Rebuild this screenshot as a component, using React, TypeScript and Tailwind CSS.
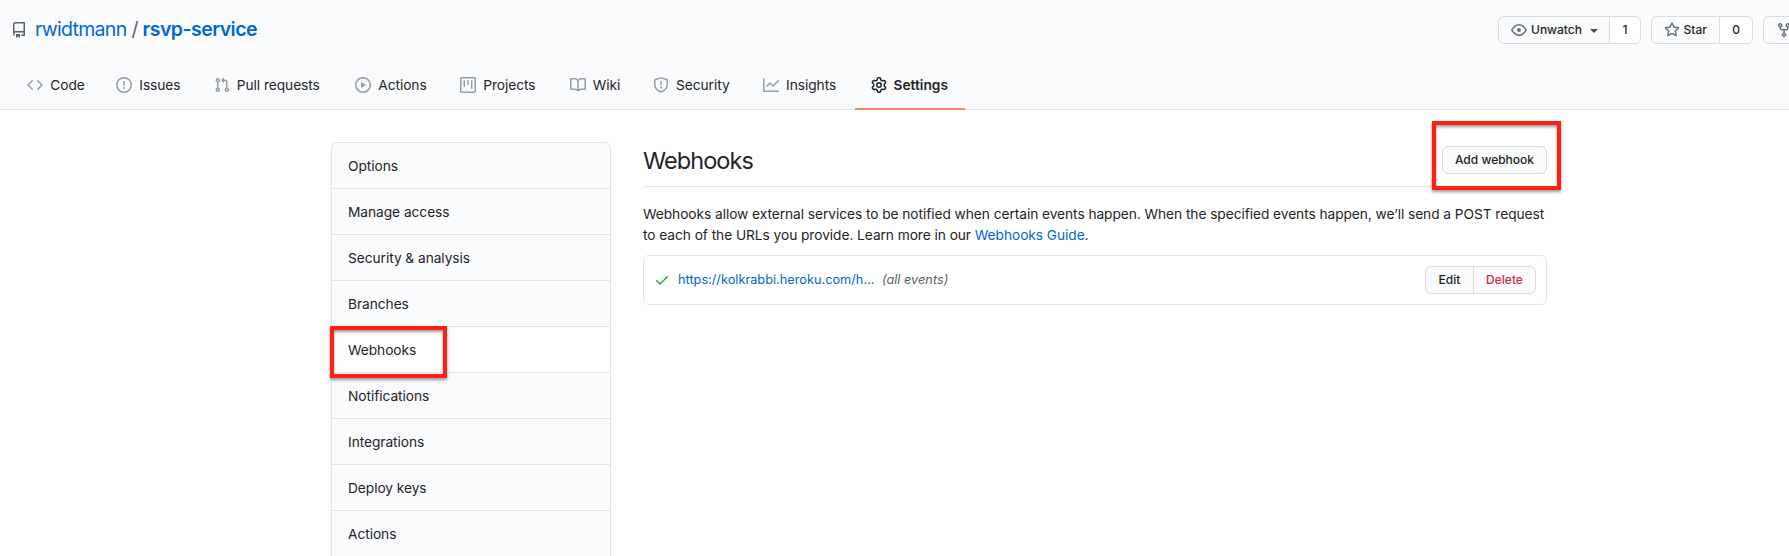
import React from "react";

type IconName = keyof typeof paths;

const paths = {
  repo: "M2 2.5A2.5 2.5 0 014.5 0h8.75a.75.75 0 01.75.75v12.5a.75.75 0 01-.75.75h-2.5a.75.75 0 110-1.5h1.75v-2h-8a1 1 0 00-.714 1.7.75.75 0 01-1.072 1.05A2.495 2.495 0 012 11.5v-9zm10.5-1V9h-8c-.356 0-.694.074-1 .208V2.5a1 1 0 011-1h8zM5 12.25v3.25a.25.25 0 00.4.2l1.45-1.087a.25.25 0 01.3 0L8.6 15.7a.25.25 0 00.4-.2v-3.25a.25.25 0 00-.25-.25h-3.5a.25.25 0 00-.25.25z",
  code: "M4.72 3.22a.75.75 0 011.06 1.06L2.06 8l3.72 3.72a.75.75 0 11-1.06 1.06L.47 8.53a.75.75 0 010-1.06l4.25-4.25zm6.56 0a.75.75 0 10-1.06 1.06L13.94 8l-3.72 3.72a.75.75 0 101.06 1.06l4.25-4.25a.75.75 0 000-1.06l-4.25-4.25z",
  issue: "M8 1.5a6.5 6.5 0 100 13 6.5 6.5 0 000-13zM0 8a8 8 0 1116 0A8 8 0 010 8zm9 3a1 1 0 11-2 0 1 1 0 012 0zm-.25-6.25a.75.75 0 00-1.5 0v3.5a.75.75 0 001.5 0v-3.5z",
  pull: "M7.177 3.073L9.573.677A.25.25 0 0110 .854v4.792a.25.25 0 01-.427.177L7.177 3.427a.25.25 0 010-.354zM3.75 2.5a.75.75 0 100 1.5.75.75 0 000-1.5zm-2.25.75a2.25 2.25 0 113 2.122v5.256a2.251 2.251 0 11-1.5 0V5.372A2.25 2.25 0 011.5 3.25zM11 2.5h-1V4h1a1 1 0 011 1v5.628a2.251 2.251 0 101.5 0V5A2.5 2.5 0 0011 2.5zm1 10.25a.75.75 0 111.5 0 .75.75 0 01-1.5 0zM3.75 12a.75.75 0 100 1.5.75.75 0 000-1.5z",
  play: "M1.5 8a6.5 6.5 0 1113 0 6.5 6.5 0 01-13 0zM8 0a8 8 0 100 16A8 8 0 008 0zM6.379 5.227A.25.25 0 006 5.442v5.117a.25.25 0 00.379.214l4.264-2.559a.25.25 0 000-.428L6.379 5.227z",
  project: "M1.75 0A1.75 1.75 0 000 1.75v12.5C0 15.216.784 16 1.75 16h12.5A1.75 1.75 0 0016 14.25V1.75A1.75 1.75 0 0014.25 0H1.75zM1.5 1.75a.25.25 0 01.25-.25h12.5a.25.25 0 01.25.25v12.5a.25.25 0 01-.25.25H1.75a.25.25 0 01-.25-.25V1.75zM11.75 3a.75.75 0 00-.75.75v7.5a.75.75 0 001.5 0v-7.5a.75.75 0 00-.75-.75zm-8.25.75a.75.75 0 011.5 0v5.5a.75.75 0 01-1.5 0v-5.5zM8 3a.75.75 0 00-.75.75v3.5a.75.75 0 001.5 0v-3.5A.75.75 0 008 3z",
  book: "M0 1.75A.75.75 0 01.75 1h4.253c1.227 0 2.317.59 3 1.501A3.744 3.744 0 0111.006 1h4.245a.75.75 0 01.75.75v10.5a.75.75 0 01-.75.75h-4.507a2.25 2.25 0 00-1.591.659l-.622.621a.75.75 0 01-1.06 0l-.622-.621A2.25 2.25 0 005.258 13H.75a.75.75 0 01-.75-.75V1.75zm8.755 3a2.25 2.25 0 012.25-2.25H14.5v9h-3.757c-.71 0-1.4.201-1.992.572l.004-7.322zm-1.504 7.324l.004-5.073-.002-2.253A2.25 2.25 0 005.003 2.5H1.5v9h3.757a3.75 3.75 0 011.994.574z",
  shield: "M7.467.133a1.75 1.75 0 011.066 0l5.25 1.68A1.75 1.75 0 0115 3.48V7c0 1.566-.32 3.182-1.303 4.682-.983 1.498-2.585 2.813-5.032 3.855a1.7 1.7 0 01-1.33 0c-2.447-1.042-4.049-2.357-5.032-3.855C1.32 10.182 1 8.566 1 7V3.48a1.75 1.75 0 011.217-1.667l5.25-1.68zm.61 1.429a.25.25 0 00-.153 0l-5.25 1.68a.25.25 0 00-.174.238V7c0 1.358.275 2.666 1.057 3.86.784 1.194 2.121 2.34 4.366 3.297a.2.2 0 00.154 0c2.245-.956 3.582-2.104 4.366-3.298C13.225 9.666 13.5 8.36 13.5 7V3.48a.25.25 0 00-.174-.237l-5.25-1.68zM9 10.5a1 1 0 11-2 0 1 1 0 012 0zm-.25-5.75a.75.75 0 10-1.5 0v3a.75.75 0 001.5 0v-3z",
  graph: "M1.5 1.75a.75.75 0 00-1.5 0v12.5c0 .414.336.75.75.75h14.5a.75.75 0 000-1.5H1.5V1.75zm14.28 2.53a.75.75 0 00-1.06-1.06L10 7.94 7.53 5.47a.75.75 0 00-1.06 0L3.22 8.72a.75.75 0 001.06 1.06L7 7.06l2.47 2.47a.75.75 0 001.06 0l5.25-5.25z",
  gear: "M7.429 1.525a6.593 6.593 0 011.142 0c.036.003.108.036.137.146l.289 1.105c.147.56.55.967.997 1.189.174.086.341.183.501.29.417.278.97.423 1.53.27l1.102-.303c.11-.03.175.016.195.046.219.31.41.641.573.989.014.031.022.11-.059.19l-.815.806c-.411.406-.562.957-.53 1.456a4.588 4.588 0 010 .582c-.032.499.119 1.05.53 1.456l.815.806c.08.08.073.159.059.19a6.494 6.494 0 01-.573.99c-.02.029-.086.074-.195.045l-1.103-.303c-.559-.153-1.112-.008-1.529.27-.16.107-.327.204-.5.29-.449.222-.851.628-.998 1.189l-.289 1.105c-.029.11-.101.143-.137.146a6.613 6.613 0 01-1.142 0c-.036-.003-.108-.037-.137-.146l-.289-1.105c-.147-.56-.55-.967-.997-1.189a4.502 4.502 0 01-.501-.29c-.417-.278-.97-.423-1.53-.27l-1.102.303c-.11.03-.175-.016-.195-.046a6.492 6.492 0 01-.573-.989c-.014-.031-.022-.11.059-.19l.815-.806c.411-.406.562-.957.53-1.456a4.587 4.587 0 010-.582c.032-.499-.119-1.05-.53-1.456l-.815-.806c-.08-.08-.073-.159-.059-.19a6.44 6.44 0 01.573-.99c.02-.029.086-.075.195-.045l1.103.303c.559.153 1.112.008 1.529-.27.16-.107.327-.204.5-.29.449-.222.851-.628.998-1.189l.289-1.105c.029-.11.101-.143.137-.146zM8 0c-.236 0-.47.01-.701.03-.743.065-1.29.615-1.458 1.261l-.29 1.106c-.017.066-.078.158-.211.224a5.994 5.994 0 00-.668.386c-.123.082-.233.09-.3.071L3.27 2.776c-.644-.177-1.392.02-1.82.63a7.977 7.977 0 00-.704 1.217c-.315.675-.111 1.422.363 1.891l.815.806c.05.048.098.147.088.294a6.084 6.084 0 000 .772c.01.147-.038.246-.088.294l-.815.806c-.474.469-.678 1.216-.363 1.891.2.428.436.835.704 1.218.428.609 1.176.806 1.82.63l1.103-.303c.066-.019.176-.011.299.071.213.143.436.272.668.386.133.066.194.158.212.224l.289 1.106c.169.646.715 1.196 1.458 1.26a8.094 8.094 0 001.402 0c.743-.064 1.29-.614 1.458-1.26l.29-1.106c.017-.066.078-.158.211-.224a5.98 5.98 0 00.668-.386c.123-.082.233-.09.3-.071l1.102.302c.644.177 1.392-.02 1.82-.63.268-.382.505-.789.704-1.217.315-.675.111-1.422-.364-1.891l-.814-.806c-.05-.048-.098-.147-.088-.294a6.1 6.1 0 000-.772c-.01-.147.039-.246.088-.294l.814-.806c.475-.469.679-1.216.364-1.891a7.992 7.992 0 00-.704-1.218c-.428-.609-1.176-.806-1.82-.63l-1.103.303c-.066.019-.176.011-.299-.071a5.991 5.991 0 00-.668-.386c-.133-.066-.194-.158-.212-.224L10.16 1.29C9.99.645 9.444.095 8.701.031A8.094 8.094 0 008 0zm1.5 8a1.5 1.5 0 11-3 0 1.5 1.5 0 013 0zM11 8a3 3 0 11-6 0 3 3 0 016 0z",
  eye: "M1.679 7.932c.412-.621 1.242-1.75 2.366-2.717C5.175 4.242 6.527 3.5 8 3.5c1.473 0 2.824.742 3.955 1.715 1.124.967 1.954 2.096 2.366 2.717a.119.119 0 010 .136c-.412.621-1.242 1.75-2.366 2.717C10.825 11.758 9.473 12.5 8 12.5c-1.473 0-2.824-.742-3.955-1.715C2.92 9.818 2.09 8.69 1.679 8.068a.119.119 0 010-.136zM8 2c-1.981 0-3.67.992-4.933 2.078C1.797 5.169.88 6.423.43 7.1a1.619 1.619 0 000 1.798c.45.678 1.367 1.932 2.637 3.024C4.329 13.008 6.019 14 8 14c1.981 0 3.67-.992 4.933-2.078 1.27-1.091 2.187-2.345 2.637-3.023a1.619 1.619 0 000-1.798c-.45-.678-1.367-1.932-2.637-3.023C11.671 2.992 9.981 2 8 2zm0 8a2 2 0 100-4 2 2 0 000 4z",
  star: "M8 .25a.75.75 0 01.673.418l1.882 3.815 4.21.612a.75.75 0 01.416 1.279l-3.046 2.97.719 4.192a.75.75 0 01-1.088.791L8 12.347l-3.766 1.98a.75.75 0 01-1.088-.79l.72-4.194L.818 6.374a.75.75 0 01.416-1.28l4.21-.611L7.327.668A.75.75 0 018 .25zm0 2.445L6.615 5.5a.75.75 0 01-.564.41l-3.097.45 2.24 2.184a.75.75 0 01.216.664l-.528 3.084 2.769-1.456a.75.75 0 01.698 0l2.77 1.456-.53-3.084a.75.75 0 01.216-.664l2.24-2.183-3.096-.45a.75.75 0 01-.564-.41L8 2.694v.001z",
  fork: "M5 3.25a.75.75 0 11-1.5 0 .75.75 0 011.5 0zm0 2.122a2.25 2.25 0 10-1.5 0v.878A2.25 2.25 0 005.75 8.5h1.5v2.128a2.251 2.251 0 101.5 0V8.5h1.5a2.25 2.25 0 002.25-2.25v-.878a2.25 2.25 0 10-1.5 0v.878a.75.75 0 01-.75.75h-4.5A.75.75 0 015 6.25v-.878zm3.75 7.378a.75.75 0 11-1.5 0 .75.75 0 011.5 0zm3-8.75a.75.75 0 100-1.5.75.75 0 000 1.5z",
  check: "M13.78 4.22a.75.75 0 010 1.06l-7.25 7.25a.75.75 0 01-1.06 0L2.22 9.28a.75.75 0 011.06-1.06L6 10.94l6.72-6.72a.75.75 0 011.06 0z",
};

function Icon({ name, className = "" }: { name: IconName; className?: string }) {
  return (
    <svg viewBox="0 0 16 16" className={`size-4 shrink-0 fill-current ${className}`} aria-hidden="true">
      <path fillRule="evenodd" d={paths[name]} />
    </svg>
  );
}

const tabs: { label: string; icon: IconName; width: string; active?: boolean }[] = [
  { label: "Code", icon: "code", width: "w-[89px]" },
  { label: "Issues", icon: "issue", width: "w-[97.5px]" },
  { label: "Pull requests", icon: "pull", width: "w-[141.5px]" },
  { label: "Actions", icon: "play", width: "w-[105px]" },
  { label: "Projects", icon: "project", width: "w-[109.6px]" },
  { label: "Wiki", icon: "book", width: "w-[83.2px]" },
  { label: "Security", icon: "shield", width: "w-[110px]" },
  { label: "Insights", icon: "graph", width: "w-[108.2px]" },
  { label: "Settings", icon: "gear", width: "w-[110px]", active: true },
];

const menu = [
  "Options",
  "Manage access",
  "Security & analysis",
  "Branches",
  "Webhooks",
  "Notifications",
  "Integrations",
  "Deploy keys",
  "Actions",
];

const button = "flex h-7 items-center border border-[#d9dbdd] text-xs font-medium text-[#1b1f23]";

function Header() {
  return (
    <header className="h-[110px] border-b border-[#e1e4e8] bg-[#fafbfc]">
      <div className="flex h-[59px] items-start justify-between pt-4">
        <div className="flex h-[26px] items-center pl-[11px] text-[19.5px] leading-[26px]">
          <Icon name="repo" className="mt-[1px] mr-2 text-[#586069]" />
          <a className="tracking-[-0.71px] text-[#0366d6]">rwidtmann</a>
          <span className="mr-1 ml-[5px] text-[#586069]">/</span>
          <a className="font-semibold tracking-[-0.53px] text-[#0366d6]">rsvp-service</a>
        </div>
        <div className="flex w-[291px] shrink-0 gap-[10px] overflow-hidden">
          <div className="flex shrink-0">
            <button className={`${button} w-[112px] rounded-l-md bg-[#fafbfc] pl-3`}>
              <Icon name="eye" className="mr-1 text-[#6a737d]" />
              Unwatch
              <span className="mt-px ml-2 border-x-4 border-t-4 border-x-transparent border-t-[#444d56]" />
            </button>
            <span className={`${button} -ml-px w-[32px] justify-center rounded-r-md bg-white`}>1</span>
          </div>
          <div className="flex shrink-0">
            <button className={`${button} w-[69px] rounded-l-md bg-[#fafbfc] pl-3`}>
              <Icon name="star" className="mr-1 text-[#6a737d]" />
              <span className="-ml-[0.5px]">Star</span>
            </button>
            <span className={`${button} -ml-px w-[34px] justify-center rounded-r-md bg-white`}>0</span>
          </div>
          <button className={`${button} w-[68px] shrink-0 rounded-l-md bg-[#fafbfc] pl-3`}>
            <Icon name="fork" className="text-[#6a737d]" />
          </button>
        </div>
      </div>
      <nav className="flex h-[51px] pl-[11px]">
        {tabs.map((t) => (
          <a
            key={t.label}
            className={`flex shrink-0 items-center border-b-2 pt-1 pb-[1px] pl-4 text-[13.75px] whitespace-nowrap text-[#1f2428] ${t.width} ${
              t.active ? "border-[#f9826c] font-semibold" : "border-transparent tracking-[-0.06px]"
            }`}
          >
            <Icon name={t.icon} className={t.active ? "mr-[6.5px]" : "mr-[7.25px] text-[#959da5]"} />
            {t.label}
          </a>
        ))}
      </nav>
    </header>
  );
}

function Sidebar() {
  return (
    <aside className="w-[280px] shrink-0 rounded-t-md border border-b-0 border-[#e1e4e8] bg-[#fafbfc]">
      {menu.map((item) => (
        <div
          key={item}
          className={`relative flex h-[46px] items-center border-b border-[#e1e4e8] px-4 pt-[2px] text-[13.75px] tracking-[-0.06px] first:rounded-t-md ${
            item === "Webhooks" ? "bg-white" : ""
          }`}
        >
          {item}
          {item === "Webhooks" && (
            <span className="absolute -top-[1px] -left-[2px] h-[52px] w-[117px] border-4 border-[#ff2012] shadow-[0_2px_3px_rgba(0,0,0,0.4),inset_0_2px_3px_rgba(0,0,0,0.4)]" />
          )}
        </div>
      ))}
    </aside>
  );
}

export default function App() {
  return (
    <div className="h-[556px] overflow-hidden bg-white font-['Inter','Liberation_Sans',sans-serif] text-[#1f2428]">
      <Header />
      <div className="flex gap-8 pt-8 pl-[331px]">
        <Sidebar />
        <main className="w-[904px] shrink-0">
          <div className="flex h-[45px] items-center justify-between border-b border-[#e1e4e8] pb-2">
            <h2 className="mt-[2px] text-[23.5px] tracking-[-0.95px]">Webhooks</h2>
            <div className="relative">
              <button className={`${button} w-[105px] justify-center rounded-md bg-[#fafbfc]`}>Add webhook</button>
              <span className="absolute -top-[25px] -left-[10px] h-[69px] w-[129px] border-4 border-[#ff2012] shadow-[0_2px_3px_rgba(0,0,0,0.4),inset_0_2px_3px_rgba(0,0,0,0.4)]" />
            </div>
          </div>
          <p className="mt-[17px] text-[13.75px] leading-[21px] tracking-[-0.066px] whitespace-nowrap">
            Webhooks allow external services to be notified when certain events happen. When the specified events happen,
            we’ll send a POST request
            <br />
            to each of the URLs you provide. Learn more in our <a className="text-[#0366d6]">Webhooks Guide</a>.
          </p>
          <div className="mt-[9px] flex h-[50px] items-center rounded-md border border-[#e1e4e8] pr-[10px] pl-[10px] text-[12.75px]">
            <Icon name="check" className="mr-2 text-[#28a745]" />
            <a className="text-[#0366d6]">https://kolkrabbi.heroku.com/h…</a>
            <em className="ml-[7.5px] text-[#586069]">(all events)</em>
            <div className="ml-auto flex">
              <button className={`${button} w-[49px] justify-center rounded-l-md bg-[#fafbfc]`}>Edit</button>
              <button className={`${button} -ml-px w-[63px] justify-center rounded-r-md bg-[#fafbfc] text-[#d12c40]!`}>
                Delete
              </button>
            </div>
          </div>
        </main>
      </div>
    </div>
  );
}
